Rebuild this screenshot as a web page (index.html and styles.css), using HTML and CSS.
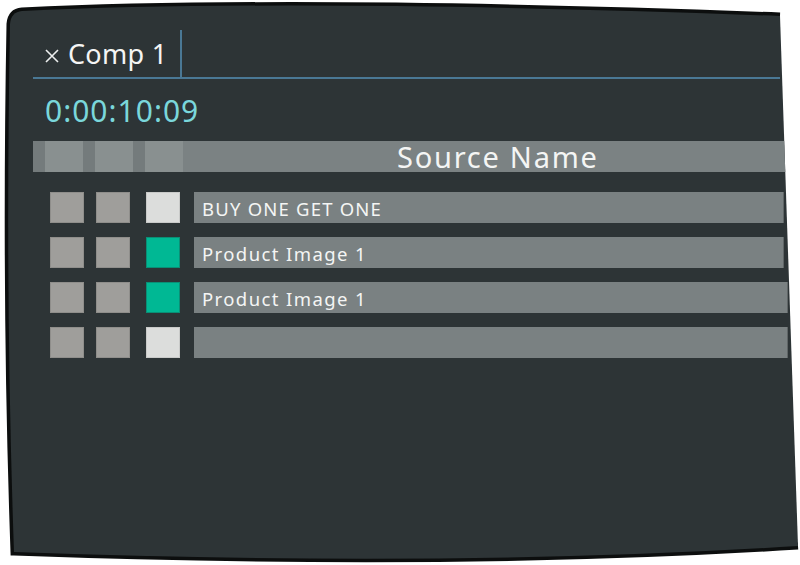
FILE: index.html
```html
<!DOCTYPE html>
<html>
<head>
<meta charset="utf-8">
<link rel="stylesheet" href="styles.css">
</head>
<body>
<div class="panel">
  <svg class="frame" width="800" height="565" viewBox="0 0 800 565">
    <path class="frame-edge" d="M780 16 Q300 -2 22 11 Q11 12 10 24 Q5 300 14 552 Q450 568 798 546"/>
    <path class="frame-fill" d="M22 11 Q300 -2 780 16 L798 546 Q450 568 14 552 Q5 300 10 24 Q11 12 22 11 Z"/>
  </svg>
  <div class="content">
    <div class="tabbar">
      <div class="tab">
        <svg class="tab-close" width="14" height="14" viewBox="0 0 14 14"><path d="M1 1 L13 13 M13 1 L1 13"/></svg>
        <span class="tab-title">Comp 1</span>
      </div>
    </div>
    <div class="time">0:00:10:09</div>
    <div class="header">
      <div class="seg dark"></div>
      <div class="seg light"></div>
      <div class="seg dark"></div>
      <div class="seg light"></div>
      <div class="seg dark"></div>
      <div class="seg light"></div>
      <div class="header-title">Source Name</div>
    </div>
    <div class="rows">
      <div class="row">
        <div class="sq grey"></div><div class="sq grey s2"></div><div class="sq white s3"></div>
        <div class="name caps">BUY ONE GET ONE</div>
      </div>
      <div class="row">
        <div class="sq grey"></div><div class="sq grey s2"></div><div class="sq green s3"></div>
        <div class="name">Product Image 1</div>
      </div>
      <div class="row wide">
        <div class="sq grey"></div><div class="sq grey s2"></div><div class="sq green s3"></div>
        <div class="name">Product Image 1</div>
      </div>
      <div class="row wide">
        <div class="sq grey"></div><div class="sq grey s2"></div><div class="sq white s3"></div>
        <div class="name"></div>
      </div>
    </div>
  </div>
</div>
</body>
</html>
```
FILE: styles.css
```css
html, body {
  margin: 0;
  padding: 0;
  background: #ffffff;
}
body {
  font-family: "Noto Sans", "Open Sans", sans-serif;
  color: #f4f5f4;
}
.panel {
  position: relative;
  width: 800px;
  height: 565px;
  overflow: hidden;
}
.frame {
  position: absolute;
  left: 0;
  top: 0;
}
.frame-edge {
  fill: none;
  stroke: #0c0e0e;
  stroke-width: 7;
}
.frame-fill {
  fill: #2d3436;
}
.content {
  position: relative;
  height: 565px;
  box-sizing: border-box;
  padding-top: 30px;
  clip-path: path("M22 11 Q300 -2 780 16 L798 546 Q450 568 14 552 Q5 300 10 24 Q11 12 22 11 Z");
}
.tabbar {
  display: flex;
  height: 47px;
  margin: 0 20px 0 33px;
  border-bottom: 2px solid #4a7895;
}
.tab {
  display: flex;
  align-items: center;
  gap: 9px;
  width: 135px;
  padding-left: 12px;
  border-right: 2px solid #4a7895;
}
.tab-close {
  flex: none;
  margin-top: 4px;
}
.tab-close path {
  stroke: #eceeee;
  stroke-width: 1.6;
  fill: none;
}
.tab-title {
  font-size: 27px;
  line-height: 1;
  letter-spacing: 0.3px;
  color: #f4f5f4;
}
.time {
  display: flex;
  align-items: center;
  height: 62px;
  padding-left: 45px;
  font-size: 30px;
  letter-spacing: 1px;
  color: #7ad7db;
}
.header {
  display: flex;
  height: 31px;
  margin-left: 33px;
  background: #7b8283;
}
.seg {
  height: 100%;
}
.seg.dark {
  width: 12px;
  background: #747b7c;
}
.seg.light {
  width: 38px;
  background: #899090;
}
.header-title {
  flex: 1;
  padding-left: 214px;
  font-size: 29px;
  line-height: 31px;
  letter-spacing: 1.75px;
  color: #f4f5f4;
}
.rows {
  display: flex;
  flex-direction: column;
  gap: 14px;
  margin-top: 20px;
  padding-left: 50px;
}
.row {
  display: flex;
  height: 31px;
}
.sq {
  width: 34px;
  height: 31px;
  box-sizing: border-box;
  margin-right: 12px;
}
.sq.s2 {
  margin-right: 16px;
}
.sq.s3 {
  margin-right: 14px;
}
.sq.grey {
  background: #9f9e9b;
  border: 1px solid #8f8e8b;
}
.sq.white {
  background: #dcdddc;
  border: 1px solid #c9cac9;
}
.sq.green {
  background: #00b894;
  border: 1px solid #0a8f76;
}
.name {
  flex: 1;
  margin-right: 16px;
  background: #7a8182;
  border-right: 1px solid #5f6566;
  padding-left: 8px;
  font-size: 18.5px;
  line-height: 33px;
  letter-spacing: 1.4px;
  color: #f4f5f4;
}
.name.caps {
  letter-spacing: 1.2px;
}
.row.wide .name {
  margin-right: 12px;
}
```
